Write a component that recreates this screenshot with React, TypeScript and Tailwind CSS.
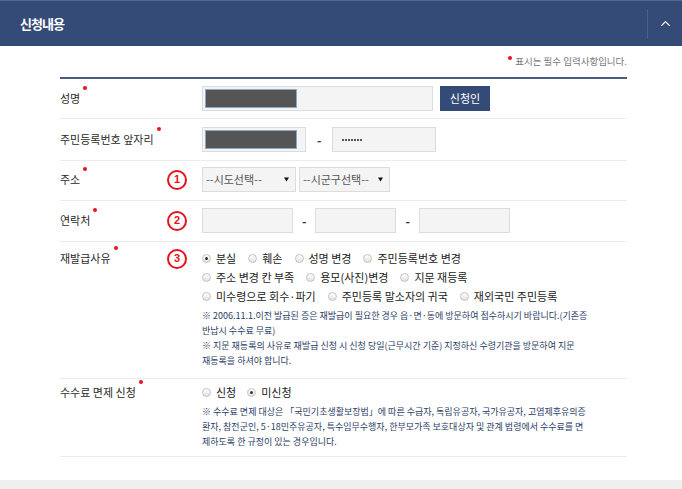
import { ChevronUp } from "lucide-react";

const FONT = "[font-family:'Noto_Sans_CJK_KR','Noto_Sans',sans-serif]";

// 필수 입력 표시 (빨간 점)
function Req({ className = "" }: { className?: string }) {
  return (
    <span
      className={`inline-block h-[4px] w-[4px] rounded-full bg-[#e8141b] align-top ${className}`}
    />
  );
}

function Num({ n }: { n: number }) {
  return (
    <span className="flex h-[20px] w-[20px] items-center justify-center rounded-full border-2 border-[#e5131c] text-[11px] font-bold leading-none text-[#e5131c] [font-family:'Liberation_Sans',sans-serif]">
      {n}
    </span>
  );
}

function Radio({ label, checked = false }: { label: string; checked?: boolean }) {
  return (
    <span className="flex items-center gap-[5px]">
      <span className="flex h-[9px] w-[9px] items-center justify-center rounded-full border border-[#c2c2c2] bg-gradient-to-b from-white to-[#e2e2e2]">
        {checked && <span className="h-[3px] w-[3px] rounded-full bg-[#333]" />}
      </span>
      <span>{label}</span>
    </span>
  );
}

function Label({ text }: { text: string }) {
  return (
    <span className="whitespace-nowrap text-[11px] leading-[19px] text-[#2a2a2a]">
      {text}
      <Req className="relative -top-[3px] ml-[3px]" />
    </span>
  );
}

function Box({ w, children }: { w: string; children?: React.ReactNode }) {
  return (
    <div
      className={`flex h-[25px] items-center border border-[#dcdcdc] bg-[#f4f4f4] px-[2px] ${w}`}
    >
      {children}
    </div>
  );
}

function Redacted() {
  return <div className="h-[19px] w-[92px] border border-[#8aa6c8] bg-[#555]" />;
}

function Dash() {
  return <span className="text-[12px] font-bold text-[#333]">-</span>;
}

function Select({ w, text }: { w: string; text: string }) {
  return (
    <div
      className={`flex h-[25px] items-center justify-between border border-[#dcdcdc] bg-[#f4f4f4] pl-[3px] pr-[6px] text-[11px] text-[#555] ${w}`}
    >
      <span>{text}</span>
      <svg width="5" height="5" viewBox="0 0 5 5">
        <path d="M0 0.5h5L2.5 4.5z" fill="#111" />
      </svg>
    </div>
  );
}

export default function App() {
  return (
    <div className={`flex h-[489px] w-full flex-col bg-white ${FONT}`}>
      {/* 헤더 */}
      <div className="flex h-[46px] items-center border-t border-[#56698f] bg-[#344b78]">
        <h2 className="flex-1 pl-[20px] text-[13px] font-bold tracking-[-1px] text-white">
          신청내용
        </h2>
        <div className="h-[30px] w-px bg-[#4b5f88]" />
        <div className="flex w-[34px] items-center justify-center">
          <ChevronUp className="h-[15px] w-[15px] text-white" strokeWidth={2.2} />
        </div>
      </div>

      <div className="ml-[60px] w-[567px]">
        <div className="flex h-[31px] items-start justify-end pt-[8px] text-[9.5px] text-[#777]">
          <Req className="relative top-[2px] mr-[3px]" />
          <span>표시는 필수 입력사항입니다.</span>
        </div>
        <div className="h-[2px] bg-[#4a5b80]" />

        {/* 성명 */}
        <div className="grid grid-cols-[107px_35px_1fr] items-center border-b border-[#ececec] pt-[7px] pb-[7px]">
          <Label text="성명" />
          <span />
          <div className="flex items-center gap-[7px]">
            <Box w="w-[231px]">
              <Redacted />
            </Box>
            <button className="h-[25px] w-[50px] bg-[#344b78] text-[11px] text-white">
              신청인
            </button>
          </div>
        </div>

        {/* 주민등록번호 */}
        <div className="grid grid-cols-[107px_35px_1fr] items-center border-b border-[#ececec] pt-[8px] pb-[8px]">
          <Label text="주민등록번호 앞자리" />
          <span />
          <div className="flex items-center gap-[11px]">
            <Box w="w-[104px]">
              <Redacted />
            </Box>
            <Dash />
            <Box w="w-[104px]">
              <span className="flex gap-[1px] pl-[7px]">
                {[0, 1, 2, 3, 4, 5, 6].map((i) => (
                  <span key={i} className="h-[2px] w-[2px] rounded-full bg-[#222]" />
                ))}
              </span>
            </Box>
          </div>
        </div>

        {/* 주소 */}
        <div className="grid grid-cols-[107px_35px_1fr] items-center border-b border-[#ececec] pt-[6px] pb-[8px]">
          <Label text="주소" />
          <Num n={1} />
          <div className="flex items-center gap-[3px]">
            <Select w="w-[94px]" text="--시도선택--" />
            <Select w="w-[91px]" text="--시군구선택--" />
          </div>
        </div>

        {/* 연락처 */}
        <div className="grid grid-cols-[107px_35px_1fr] items-center border-b border-[#ececec] pt-[7px] pb-[8px]">
          <Label text="연락처" />
          <Num n={2} />
          <div className="flex items-center gap-[9px]">
            <Box w="w-[91px]" />
            <Dash />
            <Box w="w-[81px]" />
            <Dash />
            <Box w="w-[91px]" />
          </div>
        </div>

        {/* 재발급사유 */}
        <div className="grid grid-cols-[107px_35px_1fr] items-start border-b border-[#ececec] pt-[7px] pb-[10px]">
          <Label text="재발급사유" />
          <div className="flex h-[19px] items-center">
            <Num n={3} />
          </div>
          <div>
            <div className="text-[11px] leading-[19px] text-[#222]">
              <div className="flex gap-[12px]">
                <Radio label="분실" checked />
                <Radio label="훼손" />
                <Radio label="성명 변경" />
                <Radio label="주민등록번호 변경" />
              </div>
              <div className="flex gap-[12px]">
                <Radio label="주소 변경 칸 부족" />
                <Radio label="용모(사진)변경" />
                <Radio label="지문 재등록" />
              </div>
              <div className="flex gap-[12px]">
                <Radio label="미수령으로 회수·파기" />
                <Radio label="주민등록 말소자의 귀국" />
                <Radio label="재외국민 주민등록" />
              </div>
            </div>
            <div className="mt-[2px] whitespace-nowrap text-[9px] leading-[15px] text-[#2b3d66]">
              <p>
                ※ 2006.11.1.이전 발급된 증은 재발급이 필요한 경우 읍·면·동에 방문하여 접수하시기 바랍니다.(기존증
                <br />
                반납시 수수료 무료)
              </p>
              <p>
                ※ 지문 재등록의 사유로 재발급 신청 시 신청 당일(근무시간 기준) 지정하신 수령기관을 방문하여 지문
                <br />
                재등록을 하셔야 합니다.
              </p>
            </div>
          </div>
        </div>

        {/* 수수료 면제 신청 */}
        <div className="grid grid-cols-[107px_35px_1fr] items-start border-b border-[#ececec] pt-[4px] pb-[7px]">
          <Label text="수수료 면제 신청" />
          <span />
          <div>
            <div className="flex gap-[11px] text-[11px] leading-[19px] text-[#222]">
              <Radio label="신청" />
              <Radio label="미신청" checked />
            </div>
            <p className="mt-[2px] whitespace-nowrap text-[9px] leading-[15px] text-[#2b3d66]">
              ※ 수수료 면제 대상은 「국민기초생활보장법」에 따른 수급자, 독립유공자, 국가유공자, 고엽제후유의증
              <br />
              환자, 참전군인, 5·18민주유공자, 특수임무수행자, 한부모가족 보호대상자 및 관계 법령에서 수수료를 면
              <br />
              제하도록 한 규정이 있는 경우입니다.
            </p>
          </div>
        </div>
      </div>

      <div className="flex-1" />
      <div className="h-[9px] bg-[#efefef]" />
    </div>
  );
}
